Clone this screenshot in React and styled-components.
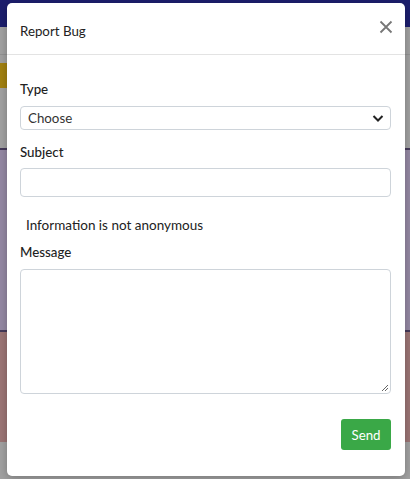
import React from "react";
import styled, { createGlobalStyle } from "styled-components";

const Global = createGlobalStyle`
  html, body { margin: 0; padding: 0; height: 100%; }
  body { font-family: Lato, "Open Sans", sans-serif; overflow: hidden; }
  #root { height: 100%; }
`;

const Page = styled.div`
  position: relative;
  width: 410px;
  height: 479px;
  background: #f7f7f7;
  overflow: hidden;
`;

const NavBar = styled.div`
  height: 27px;
  background: #2b2fa8;
`;

const SubBar = styled.div`
  height: 27px;
  border-bottom: 1px solid #e0e0e0;
`;

const Content = styled.div`
  display: flex;
  flex-direction: column;
  padding-top: 8px;
`;

const YellowBtn = styled.div`
  width: 60px;
  height: 25px;
  background: #f7c51a;
  margin-bottom: 12px;
`;

const Band = styled.div`
  height: ${(p) => p.h}px;
  background: ${(p) => p.bg};
  border-top: ${(p) => (p.line ? "2px solid #6a5a8a" : "none")};
`;

const Overlay = styled.div`
  position: absolute;
  inset: 0;
  background: rgba(0, 0, 0, 0.35);
`;

const Modal = styled.div`
  position: absolute;
  left: 7px;
  top: 3px;
  width: 398px;
  height: 473px;
  background: #fff;
  border-radius: 5px;
  box-shadow: 0 2px 8px rgba(0, 0, 0, 0.25);
  display: flex;
  flex-direction: column;
  box-sizing: border-box;
`;

const Header = styled.div`
  height: 52px;
  border-bottom: 1px solid #e3e3e3;
  display: flex;
  align-items: center;
  justify-content: space-between;
  padding: 0 11px 0 13px;
  box-sizing: border-box;
`;

const Title = styled.div`
  font-size: 13.3px;
  color: #222;
  margin-top: 5px;
`;

const Close = styled.button`
  border: none;
  background: none;
  padding: 0;
  width: 16px;
  height: 16px;
  margin-top: -4px;
  cursor: pointer;
  display: flex;
`;

const Body = styled.div`
  padding: 24px 14px 0 13px;
  display: flex;
  flex-direction: column;
`;

const Label = styled.div`
  font-size: 13.3px;
  line-height: 20px;
  color: #222;
  font-weight: 500;
  margin-top: ${(p) => p.mt || 0}px;
  margin-bottom: ${(p) => p.mb}px;
`;

const SelectBox = styled.div`
  height: 24px;
  border: 1px solid #ced4da;
  border-radius: 4px;
  display: flex;
  align-items: center;
  justify-content: space-between;
  padding: 0 6px 0 7px;
  box-sizing: border-box;
  font-size: 13.3px;
  color: #333;
`;

const Input = styled.div`
  height: 29px;
  border: 1px solid #ced4da;
  border-radius: 4px;
  box-sizing: border-box;
`;

const Info = styled.div`
  font-size: 13.5px;
  line-height: 20px;
  color: #222;
  margin-top: 18px;
  padding-left: 6px;
`;

const TextArea = styled.div`
  position: relative;
  height: 125px;
  border: 1px solid #ced4da;
  border-radius: 4px;
  box-sizing: border-box;
`;

const Grip = styled.svg`
  position: absolute;
  right: 1px;
  bottom: 1px;
`;

const Footer = styled.div`
  display: flex;
  justify-content: flex-end;
  padding: 25px 14px 0 0;
`;

const Send = styled.button`
  width: 50px;
  height: 31px;
  background: #3aa847;
  color: #fff;
  border: none;
  border-radius: 3px;
  font-family: Lato, sans-serif;
  font-size: 13.3px;
  padding: 0;
`;

export default function App() {
  return (
    <>
      <Global />
      <Page>
        <NavBar />
        <SubBar />
        <Content>
          <YellowBtn />
          <Band h={48} bg="#f7f7f7" />
          <Band h={180} bg="#e4d2fb" line />
          <Band h={110} bg="#eeb4b4" line />
        </Content>
        <Overlay />
        <Modal>
          <Header>
            <Title>Report Bug</Title>
            <Close aria-label="close">
              <svg width="16" height="16" viewBox="0 0 16 16">
                <path d="M2.5 2.5 L13.5 13.5 M13.5 2.5 L2.5 13.5" stroke="#777" strokeWidth="1.8" />
              </svg>
            </Close>
          </Header>
          <Body>
            <Label mb={7}>Type</Label>
            <SelectBox>
              <span>Choose</span>
              <svg width="12" height="10" viewBox="0 0 12 10">
                <path d="M1.5 3 L6 7.5 L10.5 3" stroke="#222" strokeWidth="2" fill="none" />
              </svg>
            </SelectBox>
            <Label mt={12} mb={6}>Subject</Label>
            <Input />
            <Info>Information is not anonymous</Info>
            <Label mt={7} mb={7}>Message</Label>
            <TextArea>
              <Grip width="9" height="9" viewBox="0 0 9 9">
                <path d="M8 2 L2 8 M8 5 L5 8" stroke="#555" strokeWidth="0.9" />
              </Grip>
            </TextArea>
          </Body>
          <Footer>
            <Send>Send</Send>
          </Footer>
        </Modal>
      </Page>
    </>
  );
}
